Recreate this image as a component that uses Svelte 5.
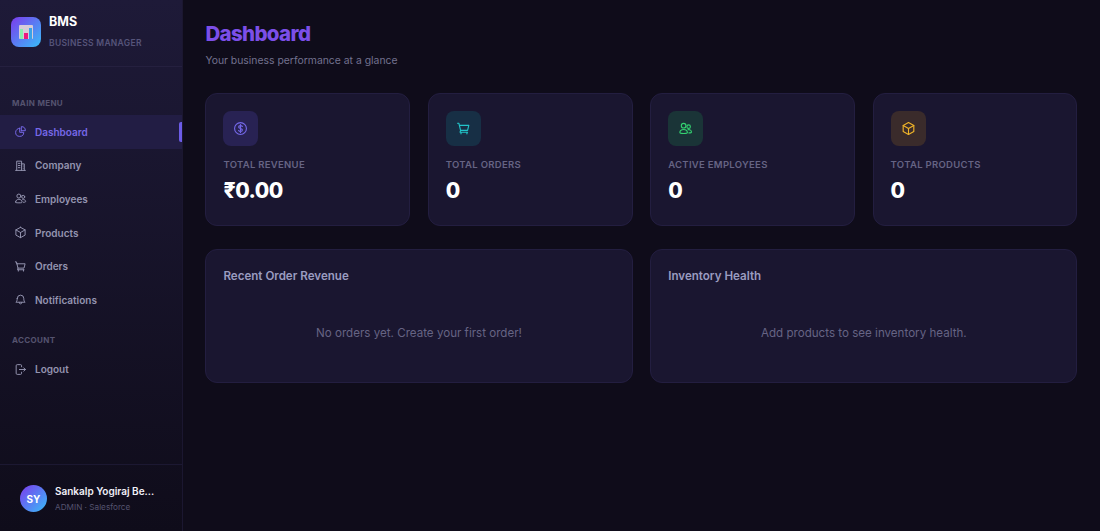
<script>
  const mainNav = [
    { label: 'Dashboard', icon: 'dash', active: true },
    { label: 'Company', icon: 'company' },
    { label: 'Employees', icon: 'users' },
    { label: 'Products', icon: 'box' },
    { label: 'Orders', icon: 'cart' },
    { label: 'Notifications', icon: 'bell' }
  ];
  const stats = [
    { label: 'TOTAL REVENUE', value: '₹0.00', icon: 'dollar', tone: 'violet' },
    { label: 'TOTAL ORDERS', value: '0', icon: 'cart', tone: 'cyan' },
    { label: 'ACTIVE EMPLOYEES', value: '0', icon: 'users', tone: 'green' },
    { label: 'TOTAL PRODUCTS', value: '0', icon: 'box', tone: 'amber' }
  ];
</script>

{#snippet icon(name)}
  <svg viewBox="0 0 24 24" fill="none" stroke="currentColor" stroke-width="1.8" stroke-linecap="round" stroke-linejoin="round">
    {#if name === 'dash'}
      <path d="M10.5 6a7.5 7.5 0 1 0 7.5 7.5h-7.5V6Z" /><path d="M13.5 10.5H21A7.5 7.5 0 0 0 13.5 3v7.5Z" />
    {:else if name === 'company'}
      <path d="M3 21h18M5 21V4h9v17M14 9h5v12M8 8h3M8 12h3M8 16h3M17 13v.01M17 17v.01" />
    {:else if name === 'users'}
      <circle cx="9" cy="7.5" r="3.7" /><circle cx="17" cy="9" r="2.8" /><path d="M3 18.5c0-3 2.7-5 6-5s6 2 6 5c0 1-.8 1.500-6 1.500s-6-.5-6-1.500Z" /><path d="M16 14c3-.5 5.500 1 5.500 3.500 0 1-1 1.500-4 1.500" />
    {:else if name === 'box'}
      <path d="M12 2.500 20.500 7.200v9.600L12 21.500l-8.500-4.700V7.200L12 2.500Z" /><path d="M3.500 7.200 12 12l8.500-4.800M12 12v9.500" />
    {:else if name === 'cart'}
      <path d="M2.500 3.500h2l.9 3.500m0 0 1.900 8h11.200l2-8H5.400Z" /><path d="M7.300 15 6.500 18h12" /><path d="M8 18v2.500M17.500 18v2.500" />
    {:else if name === 'bell'}
      <path d="M6 10a6 6 0 1 1 12 0c0 4 1 5.500 2.500 7h-17C5 15.500 6 14 6 10Z" /><path d="M9.500 17.500a2.500 2.500 0 0 0 5 0" />
    {:else if name === 'logout'}
      <path d="M14 7V5a2 2 0 0 0-2-2H6a2 2 0 0 0-2 2v14a2 2 0 0 0 2 2h6a2 2 0 0 0 2-2v-2" /><path d="M10 12h11m-3-3 3 3-3 3" />
    {:else if name === 'dollar'}
      <circle cx="12" cy="12" r="9.500" /><path d="M15 8.800c-.6-1-1.700-1.500-3-1.500-1.700 0-3 .9-3 2.300 0 3.200 6 1.600 6 4.800 0 1.400-1.300 2.300-3 2.300-1.300 0-2.400-.5-3-1.500M12 5.500v13" />
    {/if}
  </svg>
{/snippet}

<div class="app">
  <aside class="sidebar">
    <header class="brand">
      <div class="logo">
        <div class="logo-card">
          <span class="bar green"></span>
          <span class="bar pink"></span>
          <span class="bar blue"></span>
        </div>
      </div>
      <div class="brand-text">
        <strong>BMS</strong>
        <span>BUSINESS MANAGER</span>
      </div>
    </header>

    <nav class="nav">
      <div class="section first">MAIN MENU</div>
      {#each mainNav as item}
        <div class="item" class:active={item.active}>
          <span class="nav-icon">{@render icon(item.icon)}</span>
          <span>{item.label}</span>
        </div>
      {/each}
      <div class="section second">ACCOUNT</div>
      <div class="item">
        <span class="nav-icon">{@render icon('logout')}</span>
        <span>Logout</span>
      </div>
    </nav>

    <footer class="user">
      <div class="avatar">SY</div>
      <div class="user-text">
        <strong>Sankalp Yogiraj Be...</strong>
        <span>ADMIN · Salesforce</span>
      </div>
    </footer>
  </aside>

  <main class="main">
    <h1>Dashboard</h1>
    <p class="sub">Your business performance at a glance</p>

    <section class="stats">
      {#each stats as s}
        <article class="card stat">
          <div class="stat-icon {s.tone}">{@render icon(s.icon)}</div>
          <div class="stat-label">{s.label}</div>
          <div class="stat-value">{s.value}</div>
        </article>
      {/each}
    </section>

    <section class="panels">
      <article class="card panel">
        <h2>Recent Order Revenue</h2>
        <p>No orders yet. Create your first order!</p>
      </article>
      <article class="card panel">
        <h2>Inventory Health</h2>
        <p>Add products to see inventory health.</p>
      </article>
    </section>
  </main>
</div>

<style>
  :global(body) {
    margin: 0;
    background: #0f0c1a;
  }
  .app {
    display: flex;
    height: 531px;
    overflow: hidden;
    font-family: Inter, "Liberation Sans", sans-serif;
    background: #0f0c1a;
  }
  .sidebar {
    width: 182px;
    flex: none;
    display: flex;
    flex-direction: column;
    background: linear-gradient(180deg, #1e1a38 0%, #0f0c1a 100%);
    border-right: 1px solid #1b1730;
  }
  .brand {
    height: 67px;
    box-sizing: border-box;
    display: flex;
    gap: 8px;
    padding: 16px 12px 0 11px;
    border-bottom: 1px solid #25203f;
  }
  .logo {
    width: 30px;
    height: 30px;
    margin-top: 1px;
    border-radius: 8px;
    background: linear-gradient(135deg, #7c3aed, #38bdf8);
    display: flex;
    align-items: center;
    justify-content: center;
    flex: none;
  }
  .logo-card {
    width: 14px;
    height: 14px;
    background: #d6ccd8;
    border-radius: 1px;
    display: flex;
    align-items: flex-end;
    gap: 1px;
    padding: 0 1px;
    box-sizing: border-box;
  }
  .bar { flex: 1; display: block; }
  .bar.green { height: 10px; background: #86efac; }
  .bar.pink { height: 6px; background: #ec1a7e; }
  .bar.blue { height: 11px; background: #38a3e8; }
  .brand-text {
    display: flex;
    flex-direction: column;
  }
  .brand-text strong {
    font-size: 12.500px;
    line-height: 12px;
    font-weight: 700;
    color: #fff;
  }
  .brand-text span {
    margin-top: 9px;
    font-size: 8.500px;
    line-height: 12px;
    letter-spacing: 0.300px;
    font-weight: 600;
    color: #56547a;
  }
  .nav {
    flex: 1;
    display: flex;
    flex-direction: column;
  }
  .section {
    font-size: 8px;
    line-height: 10px;
    font-weight: 700;
    letter-spacing: 0.350px;
    color: #55536f;
    padding-left: 12px;
  }
  .section.first { margin-top: 31px; margin-bottom: 7px; }
  .section.second { margin-top: 18.500px; margin-bottom: 7.500px; }
  .item {
    height: 33.600px;
    display: flex;
    align-items: center;
    gap: 8px;
    padding-left: 14px;
    box-sizing: border-box;
    font-size: 10px;
    font-weight: 600;
    color: #9494b0;
    position: relative;
  }
  .item.active {
    color: #7668e8;
    background: #221d44;
  }
  .item.active::after {
    content: "";
    position: absolute;
    right: 0;
    top: 7px;
    bottom: 7px;
    width: 3px;
    border-radius: 2px 0 0 2px;
    background: #6c5ce7;
  }
  .nav-icon {
    width: 13px;
    height: 13px;
    display: flex;
    flex: none;
  }
  .nav-icon svg { width: 13px; height: 13px; }
  .user {
    height: 67px;
    box-sizing: border-box;
    border-top: 1px solid #1c1832;
    display: flex;
    align-items: center;
    gap: 8px;
    padding: 1px 0 0 20px;
  }
  .avatar {
    width: 27px;
    height: 27px;
    border-radius: 50%;
    background: linear-gradient(135deg, #7c3aed, #38bdf8);
    color: #fff;
    font-size: 10px;
    font-weight: 700;
    display: flex;
    align-items: center;
    justify-content: center;
    flex: none;
  }
  .user-text {
    display: flex;
    flex-direction: column;
    gap: 4px;
  }
  .user-text strong {
    font-size: 10px;
    line-height: 13px;
    font-weight: 600;
    color: #f1f0f7;
    white-space: nowrap;
  }
  .user-text span {
    font-size: 8.200px;
    line-height: 11px;
    color: #55536f;
  }
  .main {
    flex: 1;
    min-width: 0;
    padding: 21px 22.600px 0 22.400px;
    background: #0f0c1a;
  }
  h1 {
    margin: 0;
    font-size: 20.500px;
    line-height: 26px;
    letter-spacing: -0.650px;
    font-weight: 800;
    color: #7c4fe8;
  }
  .sub {
    margin: 6.500px 0 0;
    font-size: 10.400px;
    line-height: 14px;
    color: #73728f;
  }
  .stats {
    display: grid;
    grid-template-columns: repeat(4, 1fr);
    gap: 17.600px;
    margin-top: 25.500px;
  }
  .card {
    background: #1a1630;
    border: 1px solid #231e40;
    border-radius: 12px;
    box-sizing: border-box;
  }
  .stat {
    height: 133px;
    padding: 16.500px 17px 0;
  }
  .stat-icon {
    width: 35px;
    height: 35px;
    border-radius: 8px;
    display: flex;
    align-items: center;
    justify-content: center;
  }
  .stat-icon svg { width: 15px; height: 15px; }
  .violet { background: #282253; color: #7468e8; }
  .cyan { background: #172f45; color: #22c4c9; }
  .green { background: #1a3437; color: #34d070; }
  .amber { background: #3a2b2b; color: #f0b429; }
  .stat-label {
    margin-top: 13px;
    font-size: 9.500px;
    line-height: 12px;
    letter-spacing: 0.300px;
    font-weight: 600;
    color: #666484;
  }
  .stat-value {
    margin-top: 6px;
    font-size: 21px;
    line-height: 28px;
    letter-spacing: -0.500px;
    font-weight: 800;
    color: #fff;
  }
  .panels {
    display: grid;
    grid-template-columns: 1fr 1fr;
    gap: 17.600px;
    margin-top: 23px;
  }
  .panel {
    height: 134px;
    padding: 19px 17px 0;
  }
  h2 {
    margin: 0;
    font-size: 11.600px;
    line-height: 15px;
    font-weight: 600;
    color: #9a9cc0;
  }
  .panel p {
    margin: 41.500px 0 0;
    text-align: center;
    font-size: 11.600px;
    line-height: 15px;
    color: #666484;
  }
</style>
